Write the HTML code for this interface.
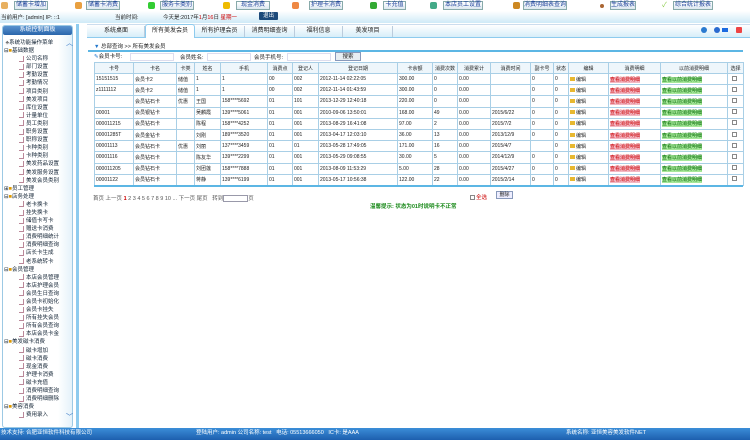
<!DOCTYPE html><html><head><meta charset="utf-8"><style>
*{margin:0;padding:0;box-sizing:border-box}
body{width:750px;height:440px;overflow:hidden;background:#fff;font-family:"Liberation Sans","Noto Sans CJK SC",sans-serif;font-size:6px;color:#222;position:relative}
.a{position:absolute}
.btn{position:absolute;top:1px;height:9px;border:1px solid #8aa;background:linear-gradient(#fff,#dde8f0);color:#1a3f9a;font-size:6px;line-height:7px;text-align:center}
.ic{position:absolute;top:2px;width:7px;height:7px;border-radius:2px}
.tab{position:absolute;top:26px;height:11px;font-size:6px;line-height:11px;text-align:center;border-right:1px solid #bcd}
table{border-collapse:collapse;position:absolute;left:94px;top:62px;width:649px;font-size:5px;table-layout:fixed}
td,th{border:1px solid #a9cfe6;height:11.2px;padding:0 1px;white-space:nowrap;overflow:hidden;font-weight:normal;text-align:left}
th{text-align:center;background:#eef6fb;height:11px}
.r{color:#c00;background:#f2b8c4}.g{color:#060;background:#a6e89a}
.cb{display:inline-block;width:5px;height:5px;border:1px solid #888;margin-left:3px}
.ed:before{content:"";display:inline-block;width:5px;height:4px;background:#e8b830;margin-right:1px}
.tree div{height:8.1px;line-height:8.1px;white-space:nowrap}
.tree .c{padding-left:15px}
.tree .c:before{content:"";display:inline-block;width:4px;height:5px;border:1px solid #b89;margin-right:2px;vertical-align:middle;border-left:none;border-top:none}
</style></head><body>
<div class="a" style="left:0;top:0;width:750px;height:12px;background:#fff"></div>
<div class="a" style="left:0;top:11px;width:750px;height:12px;background:linear-gradient(#fff,#cfeaf7)"></div>
<div class="ic" style="left:1px;background:#e8b060"></div><div class="btn" style="left:14px;width:34px">储蓄卡增加</div>
<div class="ic" style="left:75px;background:#e9a040"></div><div class="btn" style="left:86px;width:34px">储蓄卡消费</div>
<div class="ic" style="left:148px;background:#3c3"></div><div class="btn" style="left:160px;width:34px">服务卡类别</div>
<div class="ic" style="left:223px;background:#eb0"></div><div class="btn" style="left:236px;width:34px">现金消费</div>
<div class="ic" style="left:292px;background:#e84"></div><div class="btn" style="left:309px;width:34px">护理卡消费</div>
<div class="ic" style="left:370px;background:#3a3"></div><div class="btn" style="left:383px;width:23px">卡充值</div>
<div class="ic" style="left:430px;background:#4a8"></div><div class="btn" style="left:443px;width:40px">本店员工设置</div>
<div class="ic" style="left:513px;background:#c82"></div><div class="btn" style="left:523px;width:44px">消费明细表查询</div>
<div class="ic" style="left:600px;background:#a63;width:4px;height:4px;top:4px"></div><div class="btn" style="left:610px;width:26px">生成报表</div>
<div class="ic" style="left:662px;color:#8c4;font-size:7px;top:0">✓</div><div class="btn" style="left:673px;width:40px">综合统计报表</div>
<div class="a" style="left:1px;top:13px;font-size:5.5px">当前用户: [admin] IP: ::1</div>
<div class="a" style="left:115px;top:13px;font-size:5.5px">当前时间:</div>
<div class="a" style="left:163px;top:13px;font-size:5.5px">今天是:2017年<span style="color:#c00">1</span>月<span style="color:#c00">16</span>日 <span style="color:#c00">星期一</span></div>
<div class="a" style="left:259px;top:12px;width:19px;height:8px;background:#1d4a7a;color:#fff;font-size:5.5px;text-align:center;line-height:8px;border-radius:1px">退出</div>
<!-- left panel -->
<div class="a" style="left:2px;top:25px;width:71px;height:403px;border:1px solid #9cc9e4;border-radius:3px;background:linear-gradient(90deg,#fff 80%,#e4f2fa)"></div>
<div class="a" style="left:3px;top:26px;width:69px;height:9px;background:linear-gradient(#5a93cf,#2a66ab);color:#fff;font-size:6px;text-align:center;line-height:9px;border-radius:2px">系统控制面板</div>
<div class="a" style="left:76px;top:24px;width:3px;height:404px;background:#8ecbee"></div>
<div class="a tree" style="left:4px;top:39px;font-size:5.5px;color:#123">
<div>&nbsp;<span style="color:#777">♣</span>系统功能操作菜单</div><div>⊟<b style="color:#d90">■</b>基础数据</div>
<div class="c">公司名称</div><div class="c">部门设置</div><div class="c">考勤设置</div><div class="c">考勤情况</div><div class="c">项目类别</div><div class="c">美发项目</div><div class="c">库位设置</div><div class="c">计量单位</div><div class="c">员工类别</div><div class="c">职务设置</div><div class="c">职称设置</div><div class="c">卡种类别</div><div class="c">卡种类别</div><div class="c">美发药品设置</div><div class="c">美发服务设置</div><div class="c">美发会员类别</div>
<div>⊞<b style="color:#d90">■</b>员工管理</div><div>⊟<b style="color:#d90">■</b>店务处理</div>
<div class="c">老卡换卡</div><div class="c">挂失换卡</div><div class="c">储值卡写卡</div><div class="c">赠送卡消费</div><div class="c">消费明细统计</div><div class="c">消费明细查询</div><div class="c">店长卡生成</div><div class="c">老系统转卡</div>
<div>⊟<b style="color:#d90">■</b>会员管理</div>
<div class="c">本店会员管理</div><div class="c">本店护理会员</div><div class="c">会员生日查询</div><div class="c">会员卡初始化</div><div class="c">会员卡挂失</div><div class="c">所有挂失会员</div><div class="c">所有会员查询</div><div class="c">本店会员卡金</div>
<div>⊟<b style="color:#d90">■</b>美发磁卡消费</div>
<div class="c">磁卡增加</div><div class="c">磁卡消费</div><div class="c">现金消费</div><div class="c">护理卡消费</div><div class="c">磁卡充值</div><div class="c">消费明细查询</div><div class="c">消费明细删除</div>
<div>⊟<b style="color:#d90">■</b>美容消费</div><div class="c">费用录入</div>
</div>
<div class="a" style="left:66px;top:38px;color:#2a6cc0;font-size:7px">︿</div>
<div class="a" style="left:66px;top:412px;color:#2a6cc0;font-size:7px">﹀</div>
<!-- tabs -->
<div class="a" style="left:87px;top:24px;width:663px;height:14px;background:linear-gradient(#fff,#d7eef9);border-bottom:1px solid #8ecbee;border-top:1px solid #cde"></div>
<div class="tab" style="left:88px;width:57px">系统桌面</div>
<div class="a" style="left:145px;top:24px;width:50px;height:14px;background:#fff;border:1px solid #8ecbee;border-bottom:none;border-radius:3px 3px 0 0;text-align:center;line-height:13px">所有美发会员</div>
<div class="tab" style="left:195px;width:50px">所有护理会员</div>
<div class="tab" style="left:245px;width:50px">消费明细查询</div>
<div class="tab" style="left:295px;width:48px">福利信息</div>
<div class="tab" style="left:343px;width:50px">美发项目</div>
<div class="a" style="left:701px;top:27px;width:6px;height:6px;border-radius:50%;background:#2a7ad0"></div>
<div class="a" style="left:714px;top:27px;width:6px;height:6px;border-radius:50%;background:#2a6ad0"></div>
<div class="a" style="left:722px;top:28px;width:6px;height:4px;background:#1a6ae0"></div>
<div class="a" style="left:736px;top:27px;width:6px;height:6px;background:#e44;border-radius:1px"></div>
<div class="a" style="left:94px;top:42px;font-size:5.5px"><span style="color:#27c">▼</span> 总部查询 &gt;&gt; 所有美发会员</div>
<div class="a" style="left:88px;top:50px;width:655px;height:2px;background:#5cb6e4"></div>
<div class="a" style="left:94px;top:53px;font-size:5.5px;line-height:8px"><span style="color:#27c">✎</span>会员卡号:</div>
<div class="a" style="left:130px;top:53px;width:44px;height:8px;border:1px solid #dde"></div>
<div class="a" style="left:180px;top:53px;font-size:5.5px">会员姓名:</div>
<div class="a" style="left:207px;top:53px;width:44px;height:8px;border:1px solid #dde"></div>
<div class="a" style="left:254px;top:53px;font-size:5.5px">会员手机号:</div>
<div class="a" style="left:287px;top:53px;width:44px;height:8px;border:1px solid #dde"></div>
<div class="a" style="left:335px;top:52px;width:26px;height:9px;border:1px solid #89b;background:#e8eef2;text-align:center;line-height:8px;font-size:5.5px">搜索</div>
<table>
<colgroup><col style="width:39px"><col style="width:43px"><col style="width:18px"><col style="width:26px"><col style="width:47px"><col style="width:25px"><col style="width:26px"><col style="width:79px"><col style="width:35px"><col style="width:25px"><col style="width:33px"><col style="width:40px"><col style="width:23px"><col style="width:15px"><col style="width:40px"><col style="width:52px"><col style="width:67px"><col style="width:16px"></colgroup>
<tr><th>卡号</th><th>卡名</th><th>卡类</th><th>姓名</th><th>手机</th><th>消费点</th><th>登记人</th><th>登记日期</th><th>卡余额</th><th>消费次数</th><th>消费累计</th><th>消费时间</th><th>副卡号</th><th>状态</th><th>编辑</th><th>消费明细</th><th>以前消费明细</th><th>选择</th></tr>
<tr><td>15151515</td><td>会员卡2</td><td>储值</td><td>1</td><td>1</td><td>00</td><td>002</td><td>2012-11-14 02:22:05</td><td>300.00</td><td>0</td><td>0.00</td><td></td><td>0</td><td>0</td><td class="ed">编辑</td><td><span class="r">查看消费明细</span></td><td><span class="g">查看以前消费明细</span></td><td><i class="cb"></i></td></tr>
<tr><td>z1111112</td><td>会员卡2</td><td>储值</td><td>1</td><td>1</td><td>00</td><td>002</td><td>2012-11-14 01:43:59</td><td>300.00</td><td>0</td><td>0.00</td><td></td><td>0</td><td>0</td><td class="ed">编辑</td><td><span class="r">查看消费明细</span></td><td><span class="g">查看以前消费明细</span></td><td><i class="cb"></i></td></tr>
<tr><td></td><td>会员钻石卡</td><td>优惠</td><td>王国</td><td>158****5692</td><td>01</td><td>101</td><td>2013-12-29 12:40:18</td><td>220.00</td><td>0</td><td>0.00</td><td></td><td>0</td><td>0</td><td class="ed">编辑</td><td><span class="r">查看消费明细</span></td><td><span class="g">查看以前消费明细</span></td><td><i class="cb"></i></td></tr>
<tr><td>00001</td><td>会员银钻卡</td><td></td><td>吴麟霞</td><td>139****5061</td><td>01</td><td>001</td><td>2010-09-06 13:50:01</td><td>168.00</td><td>49</td><td>0.00</td><td>2015/6/22</td><td>0</td><td>0</td><td class="ed">编辑</td><td><span class="r">查看消费明细</span></td><td><span class="g">查看以前消费明细</span></td><td><i class="cb"></i></td></tr>
<tr><td>000011215</td><td>会员钻石卡</td><td></td><td>陈程</td><td>158****4252</td><td>01</td><td>001</td><td>2013-08-29 16:41:08</td><td>97.00</td><td>2</td><td>0.00</td><td>2015/7/2</td><td>0</td><td>0</td><td class="ed">编辑</td><td><span class="r">查看消费明细</span></td><td><span class="g">查看以前消费明细</span></td><td><i class="cb"></i></td></tr>
<tr><td>00001285T</td><td>会员金钻卡</td><td></td><td>刘刚</td><td>189****3520</td><td>01</td><td>001</td><td>2013-04-17 12:03:10</td><td>36.00</td><td>13</td><td>0.00</td><td>2013/12/9</td><td>0</td><td>0</td><td class="ed">编辑</td><td><span class="r">查看消费明细</span></td><td><span class="g">查看以前消费明细</span></td><td><i class="cb"></i></td></tr>
<tr><td>00001113</td><td>会员钻石卡</td><td>优惠</td><td>刘丽</td><td>137****3459</td><td>01</td><td>01</td><td>2013-05-28 17:49:05</td><td>171.00</td><td>16</td><td>0.00</td><td>2015/4/7</td><td></td><td>0</td><td class="ed">编辑</td><td><span class="r">查看消费明细</span></td><td><span class="g">查看以前消费明细</span></td><td><i class="cb"></i></td></tr>
<tr><td>00001116</td><td>会员钻石卡</td><td></td><td>陈友华</td><td>139****2299</td><td>01</td><td>001</td><td>2013-05-29 09:08:55</td><td>30.00</td><td>5</td><td>0.00</td><td>2014/12/9</td><td>0</td><td>0</td><td class="ed">编辑</td><td><span class="r">查看消费明细</span></td><td><span class="g">查看以前消费明细</span></td><td><i class="cb"></i></td></tr>
<tr><td>000011205</td><td>会员钻石卡</td><td></td><td>刘团莲</td><td>158****7888</td><td>01</td><td>001</td><td>2013-08-09 11:53:29</td><td>5.00</td><td>28</td><td>0.00</td><td>2015/4/27</td><td>0</td><td>0</td><td class="ed">编辑</td><td><span class="r">查看消费明细</span></td><td><span class="g">查看以前消费明细</span></td><td><i class="cb"></i></td></tr>
<tr><td>00001122</td><td>会员钻石卡</td><td></td><td>蒋静</td><td>139****6199</td><td>01</td><td>001</td><td>2013-05-17 10:56:38</td><td>122.00</td><td>22</td><td>0.00</td><td>2015/2/14</td><td>0</td><td>0</td><td class="ed">编辑</td><td><span class="r">查看消费明细</span></td><td><span class="g">查看以前消费明细</span></td><td><i class="cb"></i></td></tr>
</table>
<div class="a" style="left:94px;top:185px;width:649px;height:2px;background:#5cb6e4"></div>
<div class="a" style="left:93px;top:195px;font-size:5.5px;color:#555;line-height:8px">首页 上一页 <b style="color:#c00">1</b> 2 3 4 5 6 7 8 9 10 ... 下一页 尾页 &nbsp; 转到<span style="display:inline-block;width:25px;height:7px;border:1px solid #99a;vertical-align:middle;background:#fff"></span>页</div>
<div class="a" style="left:470px;top:193px;font-size:5.5px;color:#c00"><i class="cb" style="margin:0 1px 0 0;vertical-align:middle"></i>全选</div>
<div class="a" style="left:496px;top:191px;width:17px;height:8px;border:1px solid #89b;background:#eef;font-size:5px;text-align:center;line-height:7px">删除</div>
<div class="a" style="left:370px;top:202px;font-size:5.5px;color:#1a8a1a;font-weight:bold">温馨提示: 状态为01时说明卡不正常</div>
<!-- footer -->
<div class="a" style="left:0;top:428px;width:750px;height:12px;background:linear-gradient(#3b8ed8,#1d5fae);color:#fff;font-size:5.5px;line-height:11px">
<span class="a" style="left:1px">技术支持: 合肥亚恒软件科技有限公司</span>
<span class="a" style="left:196px">登陆用户: admin 公司名称: test &nbsp; 电话: 05513666050 &nbsp; IC卡: 是AAA</span>
<span class="a" style="left:566px">系统名称: 亚恒美容美发软件NET</span></div>
</body></html>
